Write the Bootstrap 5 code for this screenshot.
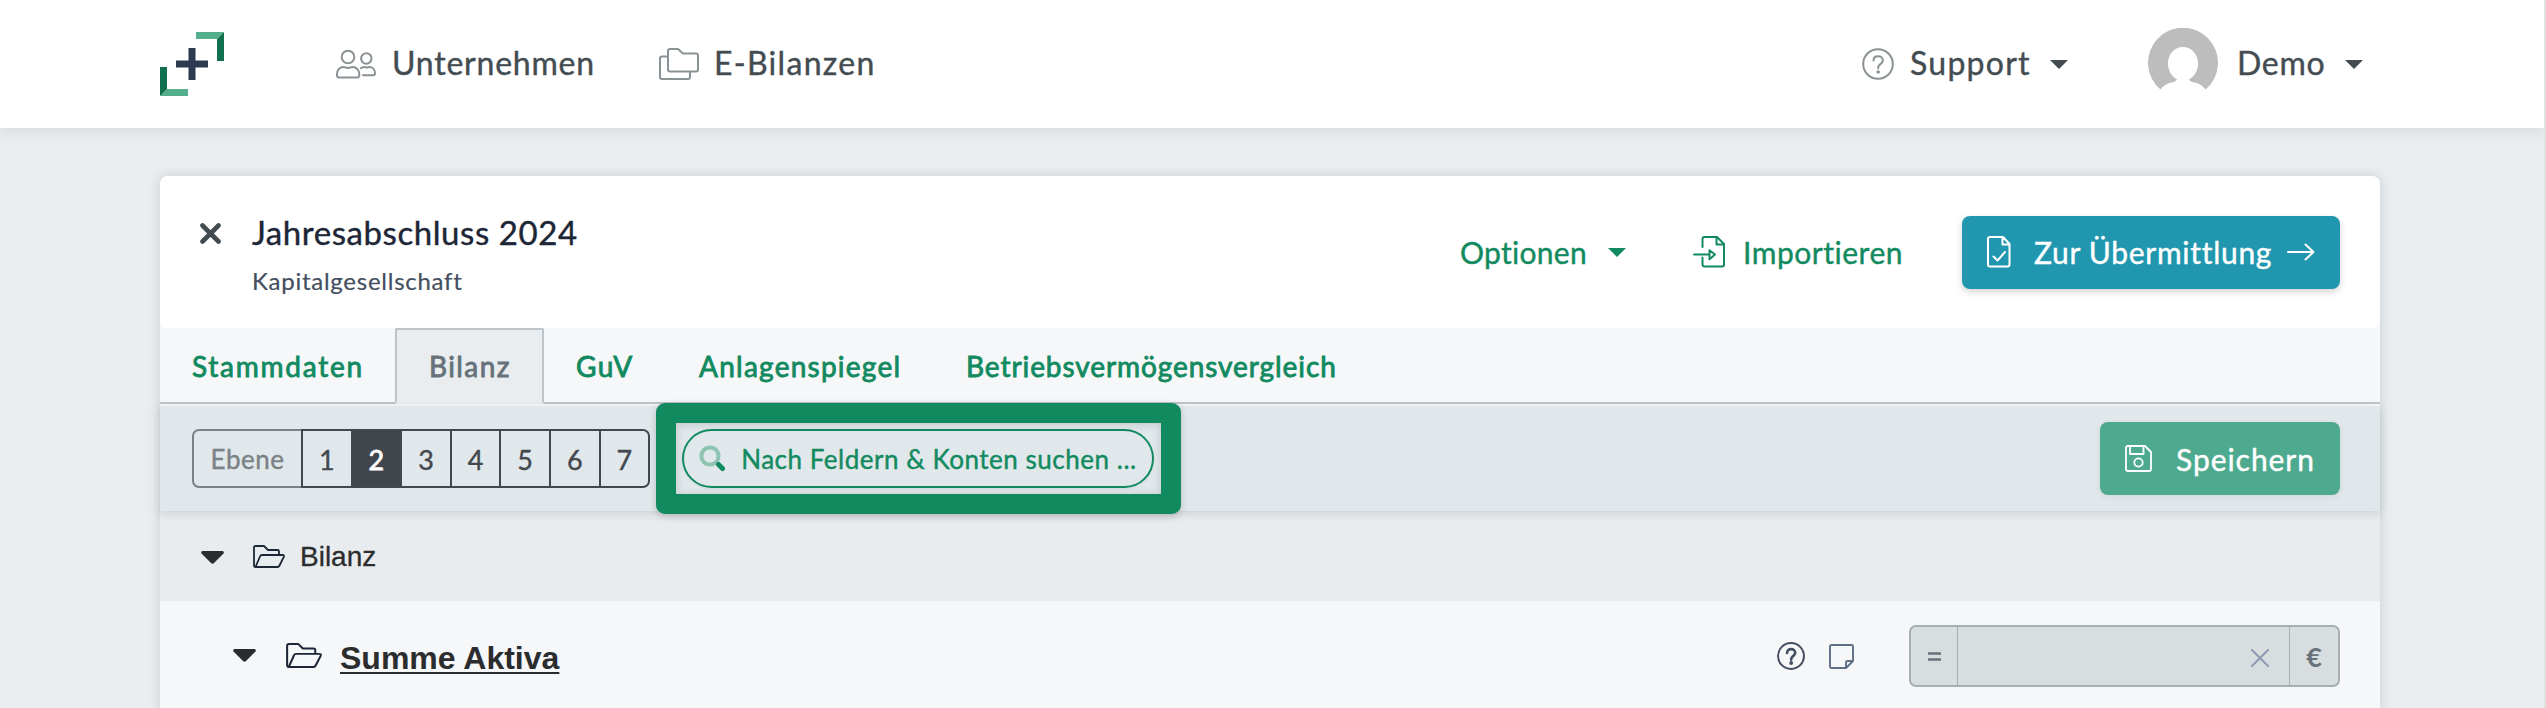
<!DOCTYPE html>
<html lang="de">
<head>
<meta charset="utf-8">
<title>Jahresabschluss 2024</title>
<link href="https://cdn.jsdelivr.net/npm/bootstrap@5.3.0/dist/css/bootstrap.min.css" rel="stylesheet">
<style>
:root{--grn:#128a60;--edge:#bdc5cb}
html{overflow:hidden}
body{font-family:Lato,"Liberation Sans",sans-serif;background:#e9edf0;width:2546px;height:708px;overflow:hidden;border-right:2px solid #e2e2e3;color:#434c51;-webkit-text-stroke:.4px currentColor}
svg{display:block;flex:none;fill:none;stroke:currentColor;stroke-linecap:round;stroke-linejoin:round}
svg.solid{stroke:none}
.topbar{height:128px;padding:0 0 0 160px;background:#fff;box-shadow:0 0 16px rgba(50,60,65,.14);font-size:32px;line-height:38px;flex-wrap:nowrap;justify-content:flex-start}
.topbar .lbl{position:relative;top:-1px}
.ico{color:#8b9295}
.caret{width:0;height:0;border:9px solid transparent;border-top-color:currentColor;border-bottom:0;flex:none}
.sheet{width:2220px;margin:48px 0 0 160px;background:#f5f7f9;border-radius:8px 8px 0 0;box-shadow:0 0 11px rgba(50,60,65,.18)}
.head{height:152px;border-radius:8px;background:#fff;padding:36px 40px 0}
.title{font-size:33px;line-height:40px;letter-spacing:.57px;color:#1c2636}
.sub{font-size:24px;line-height:30px;margin-top:14px;letter-spacing:.74px;color:#434f60;-webkit-text-stroke-width:.2px}
.act{height:80px;color:var(--grn);font-size:30px;line-height:36px}
.act .btn,.tools .btn-save{height:73px;border:0;border-radius:8px;color:#fff;font-size:30px;line-height:36px;padding:0}
.act .btn{width:378px;background:#2097ae;box-shadow:0 3px 7px rgba(0,0,0,.17)}
.nav-tabs{--bs-nav-tabs-border-width:2px;--bs-nav-tabs-border-color:var(--edge);height:76px;flex-wrap:nowrap;font-size:28px;-webkit-text-stroke-width:.85px}
.nav-tabs .nav-link{height:76px;padding:0;line-height:73px;color:var(--grn);border-radius:2px 2px 0 0;white-space:nowrap}
.nav-tabs .nav-link.active{background:#e9edf0;border-color:var(--edge) var(--edge) #e9edf0;color:#66727a}
.tools{height:105px;margin-top:2px;padding:0 40px 0 32px;background:#e1e8eb;box-shadow:0 3px 9px rgba(50,50,60,.14);position:relative;z-index:1}
.btn-group{height:59px}
.btn-group .btn{padding:0;width:51.6px;border:2px solid #43484e;color:#43484e;font-size:27px;line-height:57px;border-radius:7px;margin-left:-2px!important;background:none}
.btn-group .btn.off{width:111px;border-color:#7b8286;color:#7b8286;letter-spacing:.5px;margin-left:0!important;font-size:26px}
.btn-group .btn.active{background:#41464d;color:#fff;-webkit-text-stroke-width:.8px}
.find{width:472px;height:59px;margin-left:32px;border:2px solid var(--grn);border-radius:30px;color:var(--grn);font-size:26px;letter-spacing:.52px;position:relative;white-space:nowrap;padding-left:15px;box-shadow:0 1px 3px rgba(0,0,0,.06)}
.find::after{content:"";position:absolute;inset:-28px -29px -28px -28px;border:20px solid var(--grn);border-radius:9px;box-shadow:0 2px 7px rgba(0,0,0,.2)}
.find::before{content:"";position:absolute;inset:-8px -9px -8px -8px;box-shadow:inset 0 1px 8px rgba(0,0,0,.16)}
.find span{padding-top:2px}
.tools .btn-save{width:240px;background:#4daa8e;box-shadow:0 2px 7px rgba(0,0,0,.07)}
.node{font-family:"Liberation Sans",Arial,sans-serif;color:#2b2c2d;-webkit-text-stroke-width:0}
.lvl1{height:90px;background:#e8ecee;padding:2px 0 0 41px;font-size:28px;-webkit-text-stroke-width:.3px}
.lvl2{height:110px;background:#f5f7f9;padding:0 40px 0 73px}
.lvl2 strong{font-size:32px;line-height:38px;text-decoration:underline;text-decoration-thickness:2px;text-underline-offset:3px}
.money{width:431px;height:62px}
.money .input-group-text,.money .form-control{background:#d8dddf;border:2px solid #a5afb4;padding:0;border-radius:7px;color:#66727a}
.money .form-control{border-left:0;border-right:0}
</style>
</head>
<body>
<nav class="navbar topbar">
  <svg class="solid" width="64" height="64" viewBox="0 0 64 64"><path fill="#53ae8b" d="M36 0h28l-7 7H36zM28 64H0l7-7h21z"/><path fill="#11704e" d="M64 0v29h-7V7zM0 64V35h7v22z"/><path fill="#2d3a4f" d="M28.500 16h7v12.500H48v7H35.500V48h-7V35.500H16v-7h12.500z"/></svg>
  <a class="d-flex align-items-center text-reset text-decoration-none" style="margin-left:112px;width:323px">
    <svg class="ico" width="40" height="30" viewBox="0 0 40 30" stroke-width="2"><circle cx="12" cy="8" r="6.300"/><circle cx="30.300" cy="9.500" r="5.200"/><path d="M3 28.500h18q2.300 0 2.300-2.300v-1c0-4-2.800-7.200-6.600-7.200-1.800 0-3 .9-4.700.9S9 18 7.300 18C3.500 18 1 21.200 1 25.200v1Q1 28.500 3 28.500zM25 19.300c1-1 1.800-1.300 3-1.300.8 0 1.500.5 2.500.5s1.700-.5 2.500-.5c3.500 0 6 2.600 6 6v.5q0 1.700-1.800 1.700H27"/></svg>
    <span class="lbl" style="margin-left:16px;letter-spacing:.78px">Unternehmen</span></a>
  <a class="d-flex align-items-center text-reset text-decoration-none" style="width:1203px">
    <svg class="ico" width="40" height="32" viewBox="0 0 40 32" stroke-width="2"><path d="M11 1h8l5 4.500h13q2 0 2 2v14q0 2-2 2H11q-2 0-2-2V3q0-2 2-2zM9 8.500H3q-2 0-2 2V29q0 2 2 2h26q2 0 2-2v-5.500"/></svg>
    <span class="lbl" style="margin-left:15px;letter-spacing:1.300px">E-Bilanzen</span></a>
  <a class="d-flex align-items-center text-reset text-decoration-none" style="width:286px">
    <svg class="ico" width="32" height="32" viewBox="0 0 32 32" stroke-width="2"><circle cx="16" cy="16" r="14.800"/><path d="M11.500 12.500c0-2.700 2-4.300 4.600-4.300s4.700 1.700 4.700 4.200c0 3.800-4.600 3.600-4.600 7v.8"/><circle cx="16.200" cy="24" r=".8" fill="currentColor"/></svg>
    <span class="lbl" style="margin-left:16px;width:140px;letter-spacing:1.250px">Support</span><i class="caret"></i></a>
  <a class="d-flex align-items-center text-reset text-decoration-none">
    <svg class="solid" width="70" height="72" viewBox="0 0 70 72"><path fill="#bdbdbd" d="M12.500 61.500A35 35 0 1 1 57.500 61.500C54 56.500 48 54.500 45 54.200 42.500 53.700 41 52 41 51.500 47 48 50 42 50 35.500 50 26 43.500 19 35 19S20 26 20 35.500C20 42 23 48 29 51.500 29 52 27.500 53.700 25 54.200 22 54.500 16 56.500 12.500 61.500z"/></svg>
    <span class="lbl" style="margin-left:19px;width:108px;letter-spacing:.7px">Demo</span><i class="caret"></i></a>
</nav>
<main class="sheet">
  <header class="head d-flex">
    <svg width="21" height="21" viewBox="0 0 21 21" stroke-width="4.600" style="margin-top:10.500px"><path d="M2.500 2.500l16 16M18.500 2.500l-16 16"/></svg>
    <div style="margin-left:31px"><div class="title">Jahresabschluss 2024</div><div class="sub">Kapitalgesellschaft</div></div>
    <div class="act d-flex align-items-center ms-auto">
      <span style="width:148px;letter-spacing:.3px">Optionen</span><i class="caret"></i>
      <svg width="33" height="32" viewBox="0 0 33 32" stroke-width="2" style="margin-left:67px"><path d="M9.500 11V3q0-2 2-2H24l7 7v20.500q0 2-2 2H11.500q-2 0-2-2v-7M23.500 1v7.500H31M1 18.500h15M16.500 14.300l5.500 4.200-5.500 4.800z"/></svg>
      <span style="margin-left:17px;width:219px;letter-spacing:.52px">Importieren</span>
      <button class="btn d-flex align-items-center">
        <svg width="24" height="32" viewBox="0 0 24 32" stroke-width="2" style="margin-left:25px"><path d="M3 1h13l6.500 7v20.500q0 2-2 2H3q-2 0-2-2V3q0-2 2-2zM15.500 1v7.500h7M6.500 20.500l4 4 7.500-8.500"/></svg>
        <span class="text-start" style="margin-left:23px;width:253px;letter-spacing:.7px">Zur Übermittlung</span>
        <svg width="28" height="18" viewBox="0 0 28 18" stroke-width="2"><path d="M1 9h25M18.500 1.500L26.500 9l-8 7.500"/></svg>
      </button>
    </div>
  </header>
  <ul class="nav nav-tabs">
    <li class="nav-item"><a class="nav-link" style="width:235px;padding-left:30px;letter-spacing:1.750px">Stammdaten</a></li>
    <li class="nav-item"><a class="nav-link active" style="width:149px;padding-left:32px;letter-spacing:1.400px">Bilanz</a></li>
    <li class="nav-item"><a class="nav-link" style="width:153px;padding-left:30px;letter-spacing:1.500px">GuV</a></li>
    <li class="nav-item"><a class="nav-link" style="width:267px;padding-left:0;letter-spacing:1.250px">Anlagenspiegel</a></li>
    <li class="nav-item"><a class="nav-link" style="letter-spacing:.92px">Betriebsvermögensvergleich</a></li>
  </ul>
  <section class="tools d-flex align-items-center">
    <div class="btn-group">
      <button class="btn off">Ebene</button><button class="btn">1</button><button class="btn active">2</button><button class="btn">3</button><button class="btn">4</button><button class="btn">5</button><button class="btn">6</button><button class="btn">7</button>
    </div>
    <div class="find d-flex align-items-center">
      <svg width="27" height="27" viewBox="0 0 27 27"><circle cx="11" cy="11" r="8.600" stroke-width="4" stroke="#8fc4b3"/><path stroke-width="5" d="M19.500 19.500l4 4"/></svg>
      <span style="margin-left:15px">Nach Feldern &amp; Konten suchen ...</span>
    </div>
    <button class="btn btn-save d-flex align-items-center ms-auto">
      <svg width="27" height="27" viewBox="0 0 27 27" stroke-width="1.800" style="margin-left:25px"><path d="M3 1h17l6 6v17q0 2-2 2H3q-2 0-2-2V3q0-2 2-2zM5 1v8h13.500V1"/><circle cx="13.500" cy="17.500" r="4.200"/></svg>
      <span style="margin-left:24px;letter-spacing:.95px">Speichern</span>
    </button>
  </section>
  <div class="node lvl1 d-flex align-items-center">
    <svg class="solid" width="23" height="13" viewBox="0 0 23 13"><path fill="#2b2c2d" d="M1.500 0h20q2 .5 1 2.500L13 12q-1.500 1.500-3 0L.5 2.500Q-.5.500 1.500 0z"/></svg>
    <svg width="32" height="23" viewBox="0 0 32 23" stroke-width="1.800" color="#1c2636" style="margin:0 0 2px 29px"><path d="M2.500 22Q1 22 1 20.500v-18Q1 1 2.500 1H11l4 4h9.500Q26 5 26 6.500V10M2.500 22L7 11.500Q7.500 10 9 10h20.500q2 0 1.300 1.800L26.500 20.500Q25.800 22 24.500 22z"/></svg>
    <span style="margin-left:15px">Bilanz</span>
  </div>
  <div class="node lvl2 d-flex align-items-center">
    <svg class="solid" width="23" height="13" viewBox="0 0 23 13" style="margin-bottom:2px"><path fill="#2b2c2d" d="M1.500 0h20q2 .5 1 2.500L13 12q-1.500 1.500-3 0L.5 2.500Q-.5.500 1.500 0z"/></svg>
    <svg width="36" height="25" viewBox="0 0 32 23" preserveAspectRatio="none" stroke-width="1.800" color="#1c2636" style="margin:0 0 2px 30px"><path d="M2.500 22Q1 22 1 20.500v-18Q1 1 2.500 1H11l4 4h9.500Q26 5 26 6.500V10M2.500 22L7 11.500Q7.500 10 9 10h20.500q2 0 1.300 1.800L26.500 20.500Q25.800 22 24.500 22z"/></svg>
    <strong style="margin:3px 0 0 18px">Summe Aktiva</strong>
    <svg class="ms-auto" width="28" height="28" viewBox="0 0 32 32" stroke-width="2.300" color="#434f60"><circle cx="16" cy="16" r="14.800"/><path d="M11.500 12.500c0-2.700 2-4.300 4.600-4.300s4.700 1.700 4.700 4.200c0 3.800-4.600 3.600-4.600 7v.8" stroke-width="3"/><circle cx="16.200" cy="24" r="1" fill="currentColor"/></svg>
    <svg width="25" height="25" viewBox="0 0 25 25" stroke-width="1.900" color="#5f6f86" style="margin:0 55px 0 24px"><path d="M2.500 1h20Q24 1 24 2.500V17l-7 7H2.500Q1 24 1 22.500v-20Q1 1 2.500 1zM24 17h-5.500Q17 17 17 18.500V24"/></svg>
    <div class="input-group money flex-nowrap">
      <span class="input-group-text justify-content-center" style="width:50px"><svg width="13" height="9" viewBox="0 0 13 9" stroke-width="2.600" stroke-linecap="butt"><path d="M0 1.500h13M0 7.500h13"/></svg></span>
      <div class="form-control d-flex align-items-center"><svg width="18" height="18" viewBox="0 0 18 18" stroke-width="2" color="#8e9bb3" style="margin:3px 20px 0 auto"><path d="M1 1l16 16M17 1L1 17"/></svg></div>
      <span class="input-group-text justify-content-center" style="width:52px;font:700 27px/30px Lato,sans-serif;padding-top:2px">€</span>
    </div>
  </div>
</main>
<script src="https://cdn.jsdelivr.net/npm/bootstrap@5.3.0/dist/js/bootstrap.bundle.min.js"></script>
</body>
</html>
